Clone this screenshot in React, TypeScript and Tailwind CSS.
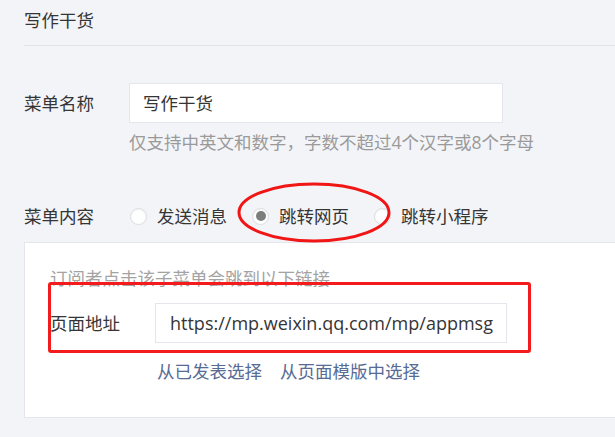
import React from "react";

const font = {
  fontFamily: '"Open Sans", "Noto Sans CJK SC", sans-serif',
};

function Radio({ label, checked }: { label: string; checked?: boolean }) {
  return (
    <label className="flex items-center mr-[25px]">
      <span className="w-[17px] h-[17px] rounded-full bg-white border border-[#dcdde1] flex items-center justify-center shadow-[inset_0_1px_2px_rgba(0,0,0,0.06)]">
        {checked && <span className="w-[10px] h-[10px] rounded-full bg-[#7d7d7d]" />}
      </span>
      <span className="ml-[10px]">{label}</span>
    </label>
  );
}

export default function App() {
  return (
    <div
      className="relative w-[615px] h-[437px] overflow-hidden bg-[#f3f4f8] text-[#353535] text-[17.5px] leading-[24px]"
      style={font}
    >
      <div className="pl-[24px]">
        {/* header */}
        <div className="pt-[8px] pb-[13px] border-b border-[#e2e4e8]">写作干货</div>

        {/* 菜单名称 */}
        <div className="mt-[37px] flex items-center">
          <div className="w-[105px]">菜单名称</div>
          <div className="w-[374px] h-[40px] bg-white border border-[#e4e6eb] flex items-center pl-[13px]">
            写作干货
          </div>
        </div>
        <div className="mt-[7px] ml-[105px] text-[#9a9a9a]">
          仅支持中英文和数字，字数不超过4个汉字或8个字母
        </div>

        {/* 菜单内容 */}
        <div className="mt-[50px] flex items-center">
          <div className="w-[106px]">菜单内容</div>
          <Radio label="发送消息" />
          <Radio label="跳转网页" checked />
          <Radio label="跳转小程序" />
        </div>

        {/* panel */}
        <div className="mt-[14px] w-[620px] h-[176px] bg-white border border-[#e4e6eb] pl-[25px] pt-[23px]">
          <div className="text-[#a3a3a3]">订阅者点击该子菜单会跳到以下链接</div>
          <div className="mt-[13px] flex items-center">
            <div className="w-[105px]">页面地址</div>
            <div className="w-[352px] h-[40px] border border-[#e4e6eb] flex items-center pl-[14px] whitespace-nowrap overflow-hidden text-[18px]">
              https://mp.weixin.qq.com/mp/appmsg
            </div>
          </div>
          <div className="mt-[16px] ml-[107px] flex gap-[18px] text-[#576b95]">
            <a href="#">从已发表选择</a>
            <a href="#">从页面模版中选择</a>
          </div>
        </div>
      </div>

      {/* red annotations */}
      <svg className="absolute left-0 top-0 pointer-events-none" width="615" height="437">
        <ellipse cx="314" cy="212.5" rx="75" ry="28.5" fill="none" stroke="#f01616" strokeWidth="3" />
      </svg>
      <div className="absolute left-[48px] top-[282px] w-[483px] h-[71px] border-[3px] border-[#f31b1b] rounded-[3px] pointer-events-none" />
    </div>
  );
}
